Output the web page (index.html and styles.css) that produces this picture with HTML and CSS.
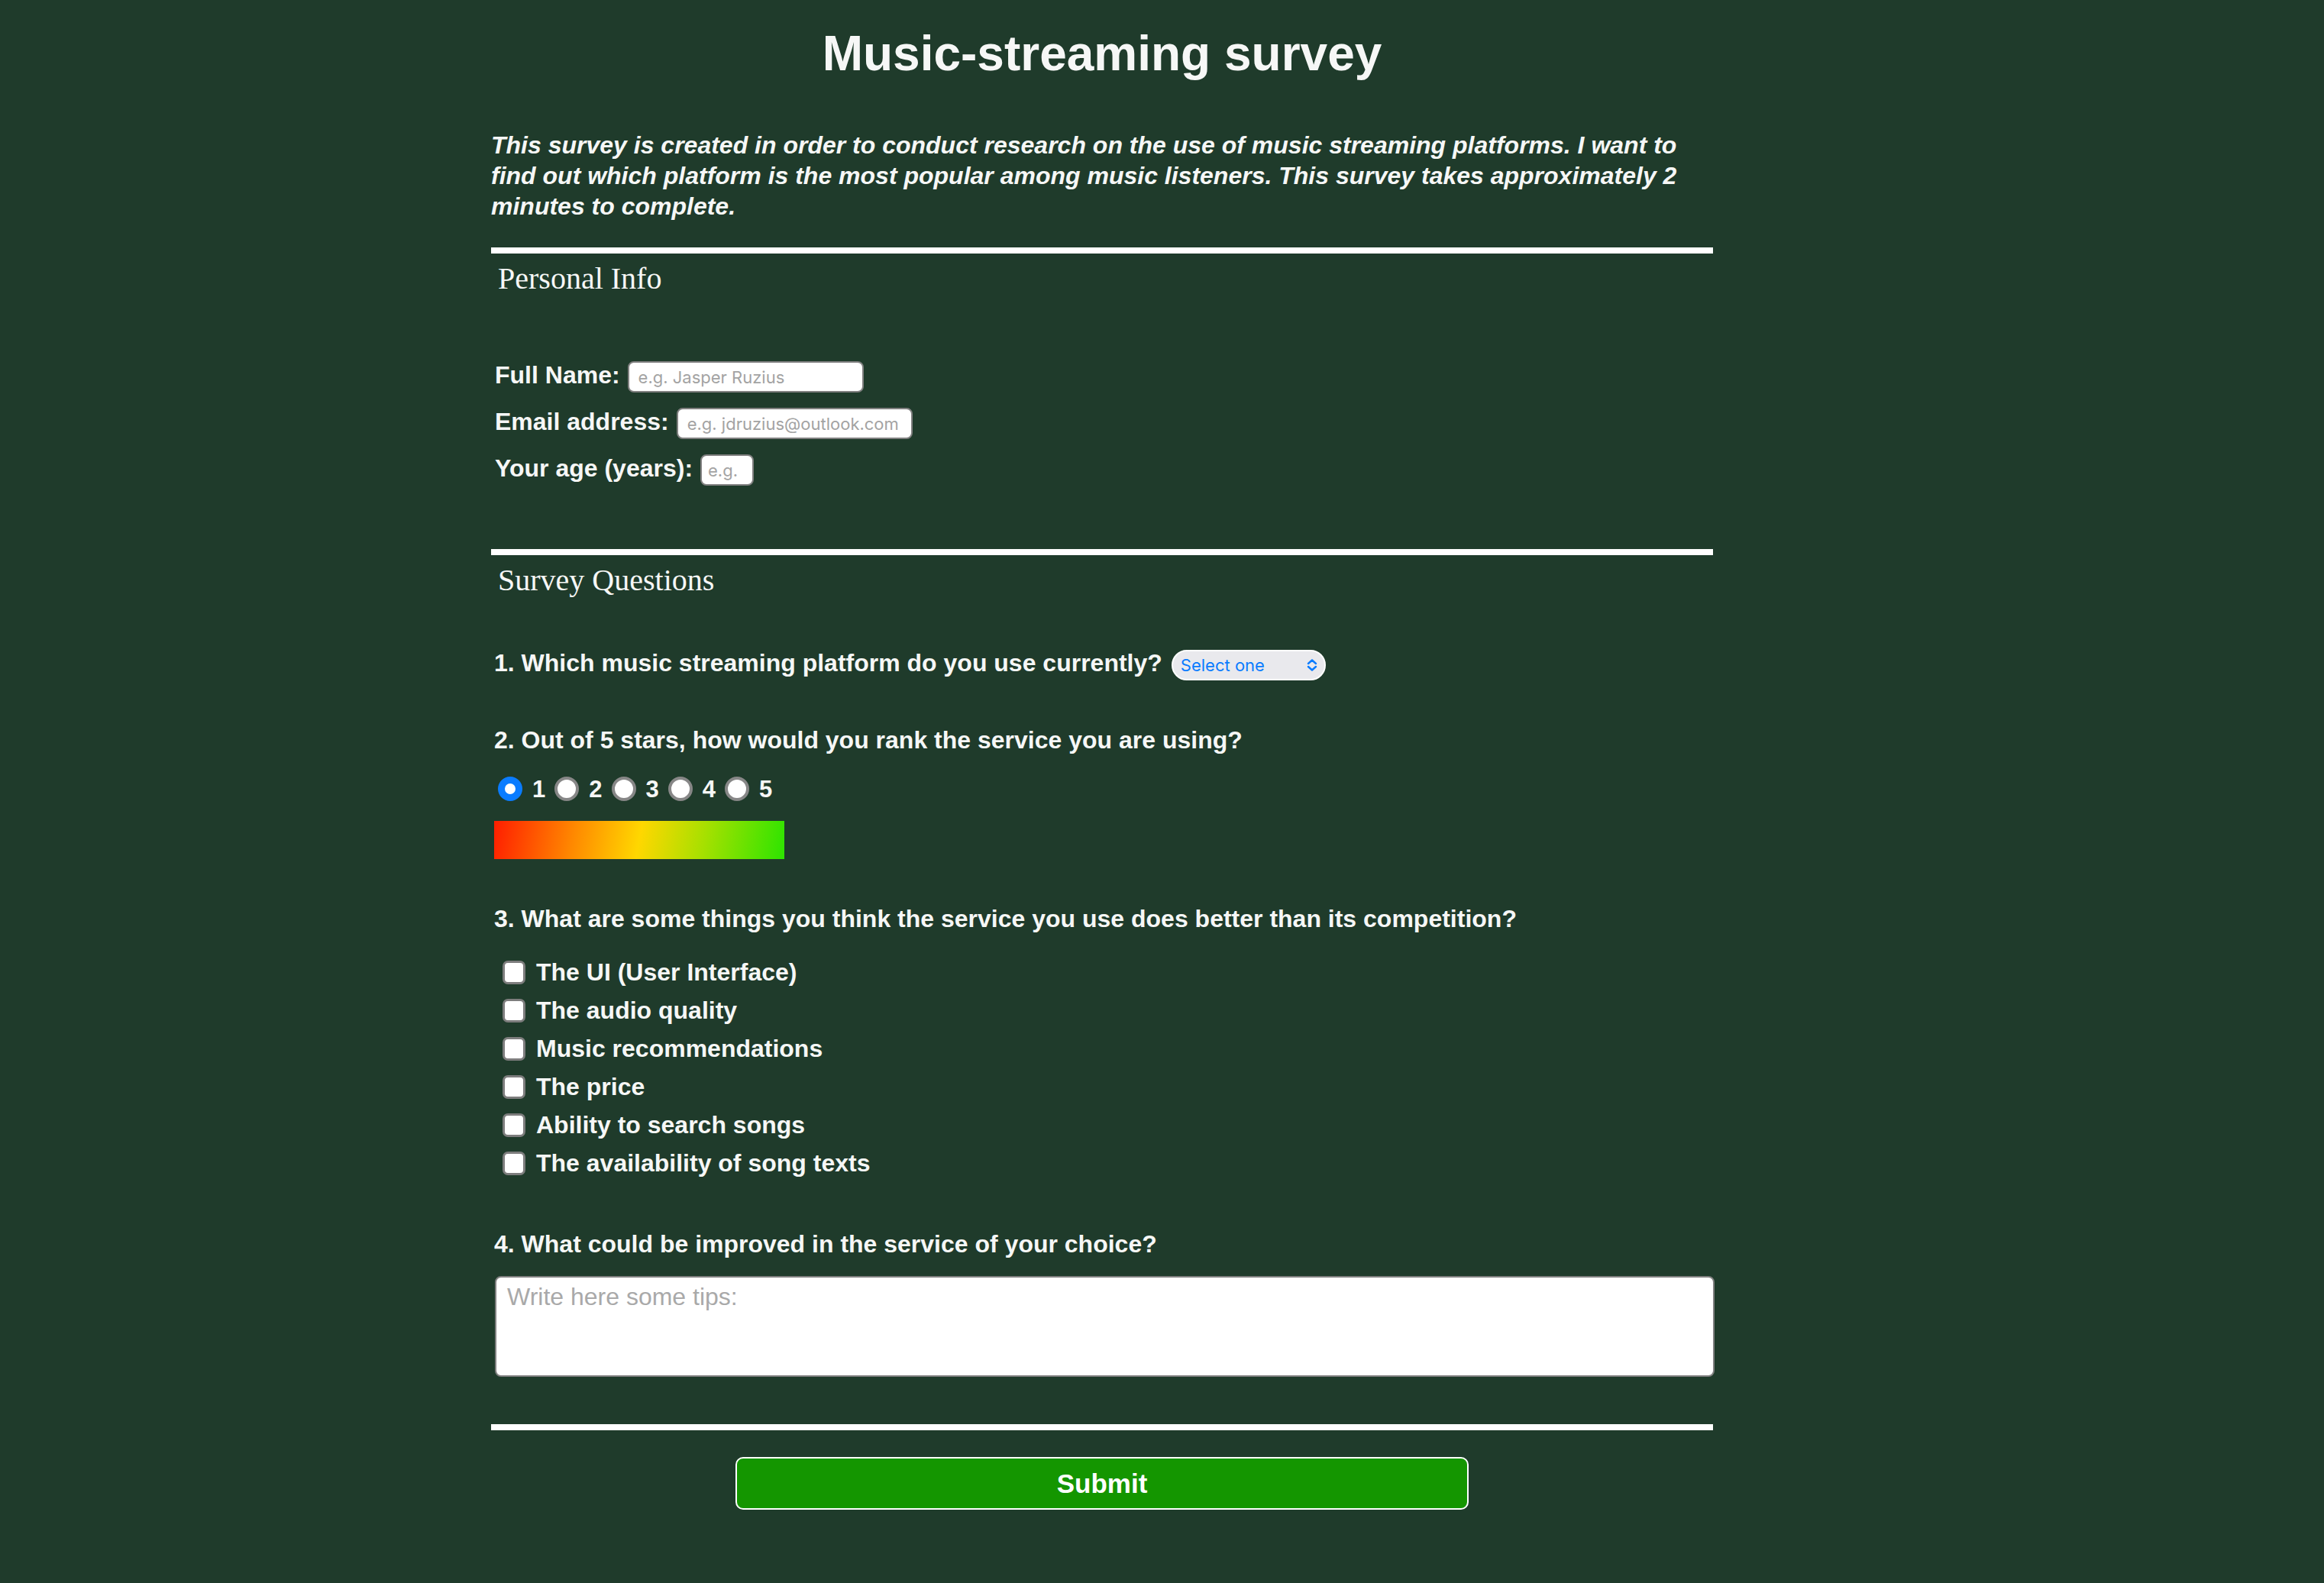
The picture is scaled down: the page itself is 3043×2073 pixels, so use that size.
FILE: index.html
```html
<!DOCTYPE html>
<html lang="en">
<head>
<meta charset="utf-8">
<title>Music-streaming survey</title>
<link rel="stylesheet" href="styles.css">
</head>
<body>
<main class="page">
  <h1 class="title">Music-streaming survey</h1>
  <p class="intro">This survey is created in order to conduct research on the use of music streaming platforms. I want to find out which platform is the most popular among music listeners. This survey takes approximately 2 minutes to complete.</p>
  <form class="survey">
    <section class="block block-personal">
      <h2 class="legend">Personal Info</h2>
      <div class="fields">
        <div class="field">
          <label class="field-label" for="name">Full Name:</label>
          <input class="text-input input-name" id="name" type="text" placeholder="e.g. Jasper Ruzius">
        </div>
        <div class="field">
          <label class="field-label" for="email">Email address:</label>
          <input class="text-input input-name" id="email" type="email" placeholder="e.g. jdruzius@outlook.com">
        </div>
        <div class="field">
          <label class="field-label" for="age">Your age (years):</label>
          <input class="text-input input-age" id="age" type="number" placeholder="e.g.">
        </div>
      </div>
    </section>

    <section class="block block-questions">
      <h2 class="legend">Survey Questions</h2>

      <div class="field q1">
        <label class="field-label" for="platform">1. Which music streaming platform do you use currently?</label>
        <div class="select-wrap">
          <select class="select" id="platform">
            <option>Select one</option>
            <option>Spotify</option>
            <option>Apple Music</option>
            <option>Deezer</option>
          </select>
          <svg class="chev" width="14" height="16" viewBox="0 0 14 16" aria-hidden="true">
            <path d="M2 6 L7 1.5 L12 6 M2 10 L7 14.5 L12 10" fill="none" stroke="#0a7cff" stroke-width="2.4" stroke-linecap="round" stroke-linejoin="round"/>
          </svg>
        </div>
      </div>

      <p class="question q2">2. Out of 5 stars, how would you rank the service you are using?</p>
      <div class="rating">
        <label class="rate"><input class="radio" type="radio" name="stars" checked><span>1</span></label>
        <label class="rate"><input class="radio" type="radio" name="stars"><span>2</span></label>
        <label class="rate"><input class="radio" type="radio" name="stars"><span>3</span></label>
        <label class="rate"><input class="radio" type="radio" name="stars"><span>4</span></label>
        <label class="rate"><input class="radio" type="radio" name="stars"><span>5</span></label>
      </div>
      <div class="scale-bar"></div>

      <p class="question q3">3. What are some things you think the service you use does better than its competition?</p>
      <div class="checks">
        <label class="check"><input class="checkbox" type="checkbox"><span>The UI (User Interface)</span></label>
        <label class="check"><input class="checkbox" type="checkbox"><span>The audio quality</span></label>
        <label class="check"><input class="checkbox" type="checkbox"><span>Music recommendations</span></label>
        <label class="check"><input class="checkbox" type="checkbox"><span>The price</span></label>
        <label class="check"><input class="checkbox" type="checkbox"><span>Ability to search songs</span></label>
        <label class="check"><input class="checkbox" type="checkbox"><span>The availability of song texts</span></label>
      </div>

      <p class="question q4">4. What could be improved in the service of your choice?</p>
      <textarea class="tips" placeholder="Write here some tips:"></textarea>
    </section>

    <section class="block block-submit">
      <button class="submit" type="submit">Submit</button>
    </section>
  </form>
</main>
</body>
</html>
```

FILE: styles.css
```css
html, body {
  margin: 0;
  padding: 0;
}

body {
  background: #1f3b2b;
  color: #f6f7f6;
  font-family: "Liberation Sans", Arial, sans-serif;
}

.page {
  margin-left: 643px;
  width: 1600px;
  padding-bottom: 96px;
}

.title {
  margin: 0;
  padding-top: 34px;
  font-size: 64px;
  line-height: 72px;
  font-weight: bold;
  text-align: center;
}

.intro {
  margin: 64px 0 0;
  font-size: 32px;
  line-height: 40px;
  font-weight: bold;
  font-style: italic;
}

.survey {
  margin: 0;
}

.block {
  border-top: 8px solid #ffffff;
}

.block-personal {
  margin-top: 34px;
  padding-bottom: 83px;
}

.legend {
  margin: 0;
  padding: 10px 0 0 9px;
  font-family: "Liberation Serif", "Times New Roman", serif;
  font-weight: normal;
  font-size: 40px;
  line-height: 45px;
}

.fields {
  margin-top: 86px;
  display: flex;
  flex-direction: column;
  gap: 20px;
  padding-left: 5px;
}

.field {
  display: flex;
  align-items: baseline;
  gap: 10px;
}

.field-label {
  font-size: 32px;
  line-height: 32px;
  font-weight: bold;
}

.text-input {
  box-sizing: border-box;
  height: 41px;
  border: 2px solid #808080;
  border-radius: 8px;
  background: #ffffff;
  padding: 0 12px;
  font-family: Inter, "Noto Sans", sans-serif;
  font-size: 22px;
  color: #222;
  outline: none;
}

.text-input::placeholder {
  color: #a3a3a3;
}

.input-name {
  width: 309px;
}

.input-age {
  width: 70px;
  padding: 0 8px;
  -moz-appearance: textfield;
}

.input-age::-webkit-inner-spin-button,
.input-age::-webkit-outer-spin-button {
  -webkit-appearance: none;
  margin: 0;
}

.q1 {
  margin-top: 69px;
  padding-left: 4px;
  gap: 12px;
}

.select-wrap {
  position: relative;
  width: 202px;
  height: 40px;
}

.select {
  -webkit-appearance: none;
  appearance: none;
  box-sizing: border-box;
  width: 202px;
  height: 40px;
  border: 2px solid #ffffff;
  border-radius: 20px;
  background: #e9e9ed;
  color: #0a7cff;
  font-family: Inter, "Noto Sans", sans-serif;
  font-size: 22px;
  padding: 0 0 0 10px;
  outline: none;
}

.chev {
  position: absolute;
  right: 11px;
  top: 12px;
  pointer-events: none;
}

.question {
  margin: 0;
  padding-left: 4px;
  font-size: 32px;
  line-height: 36px;
  font-weight: bold;
}

.q2 {
  margin-top: 60px;
}

.rating {
  margin-top: 30px;
  display: flex;
  align-items: center;
  height: 32px;
  padding-left: 9px;
  gap: 12px;
}

.rate {
  display: flex;
  align-items: center;
  gap: 13px;
  font-size: 31px;
  line-height: 32px;
  font-weight: bold;
}

.rate span {
  position: relative;
  top: 1px;
}

.radio {
  -webkit-appearance: none;
  appearance: none;
  box-sizing: border-box;
  margin: 0;
  width: 32px;
  height: 32px;
  border-radius: 50%;
  border: 4px solid #878787;
  background: #ffffff;
}

.radio:checked {
  border: 9.5px solid #0a7cff;
}

.scale-bar {
  margin: 26px 0 0 4px;
  width: 380px;
  height: 50px;
  background: linear-gradient(100deg, #ff1e00 0%, #ff8a00 28%, #ffd700 50%, #a6e000 72%, #2de400 100%);
}

.q3 {
  margin-top: 60px;
}

.checks {
  margin-top: 27px;
  display: flex;
  flex-direction: column;
}

.check {
  display: flex;
  align-items: center;
  height: 50px;
  padding-left: 15px;
  gap: 14px;
  font-size: 32px;
  line-height: 50px;
  font-weight: bold;
}

.checkbox {
  -webkit-appearance: none;
  appearance: none;
  box-sizing: border-box;
  margin: 0;
  width: 30px;
  height: 31px;
  border: 3px solid #7d7d7d;
  border-radius: 7px;
  background: #ffffff;
}

.q4 {
  margin-top: 63px;
}

.tips {
  display: block;
  box-sizing: border-box;
  margin: 24px 0 0 5px;
  width: 1597px;
  height: 132px;
  border: 2px solid #808080;
  border-radius: 8px;
  background: #ffffff;
  padding: 7px 14px;
  font-family: "Liberation Sans", Arial, sans-serif;
  font-size: 32px;
  resize: none;
  outline: none;
}

.tips::placeholder {
  color: #a9a9a9;
}

.block-questions {
  padding-bottom: 62px;
}

.block-submit {
  padding-top: 35px;
  display: flex;
  justify-content: center;
}

.submit {
  box-sizing: border-box;
  width: 960px;
  height: 69px;
  border: 2px solid #ffffff;
  border-radius: 10px;
  background: #149600;
  color: #ffffff;
  font-family: "Liberation Sans", Arial, sans-serif;
  font-size: 35px;
  font-weight: bold;
  cursor: pointer;
}
```
